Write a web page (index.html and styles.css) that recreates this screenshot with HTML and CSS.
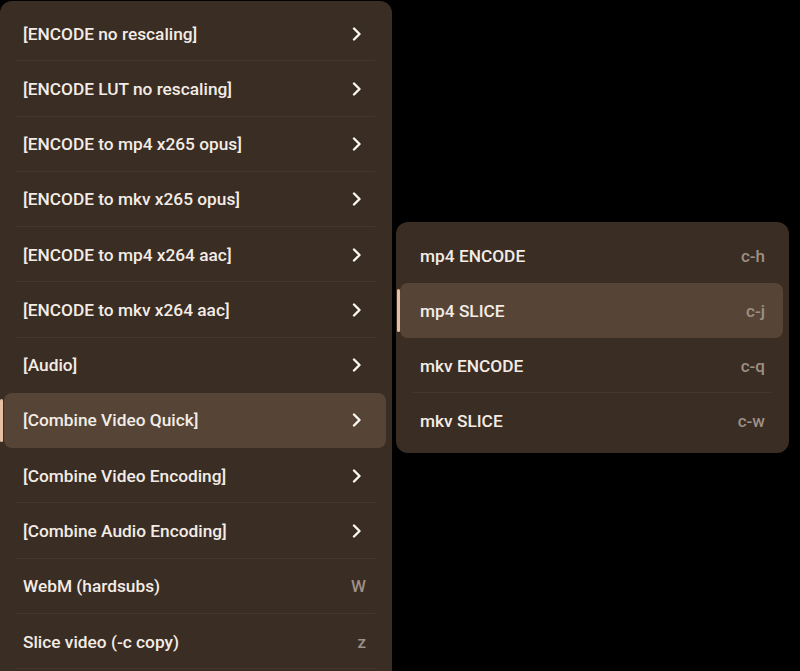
FILE: index.html
```html
<!DOCTYPE html>
<html>
<head>
<meta charset="utf-8">
<link rel="stylesheet" href="styles.css">
</head>
<body>
<div class="stage">
  <div class="menu main">
    <div class="item"><span class="label">[ENCODE no rescaling]</span><svg class="chev" viewBox="0 0 10 14"><path d="M2 1.5 L7.5 7 L2 12.5"/></svg></div>
    <div class="item"><span class="label">[ENCODE LUT no rescaling]</span><svg class="chev" viewBox="0 0 10 14"><path d="M2 1.5 L7.5 7 L2 12.5"/></svg></div>
    <div class="item"><span class="label">[ENCODE to mp4 x265 opus]</span><svg class="chev" viewBox="0 0 10 14"><path d="M2 1.5 L7.5 7 L2 12.5"/></svg></div>
    <div class="item"><span class="label">[ENCODE to mkv x265 opus]</span><svg class="chev" viewBox="0 0 10 14"><path d="M2 1.5 L7.5 7 L2 12.5"/></svg></div>
    <div class="item"><span class="label">[ENCODE to mp4 x264 aac]</span><svg class="chev" viewBox="0 0 10 14"><path d="M2 1.5 L7.5 7 L2 12.5"/></svg></div>
    <div class="item"><span class="label">[ENCODE to mkv x264 aac]</span><svg class="chev" viewBox="0 0 10 14"><path d="M2 1.5 L7.5 7 L2 12.5"/></svg></div>
    <div class="item pre-active"><span class="label">[Audio]</span><svg class="chev" viewBox="0 0 10 14"><path d="M2 1.5 L7.5 7 L2 12.5"/></svg></div>
    <div class="item active"><span class="label">[Combine Video Quick]</span><svg class="chev" viewBox="0 0 10 14"><path d="M2 1.5 L7.5 7 L2 12.5"/></svg></div>
    <div class="item"><span class="label">[Combine Video Encoding]</span><svg class="chev" viewBox="0 0 10 14"><path d="M2 1.5 L7.5 7 L2 12.5"/></svg></div>
    <div class="item"><span class="label">[Combine Audio Encoding]</span><svg class="chev" viewBox="0 0 10 14"><path d="M2 1.5 L7.5 7 L2 12.5"/></svg></div>
    <div class="item"><span class="label">WebM (hardsubs)</span><span class="key">W</span></div>
    <div class="item"><span class="label">Slice video (-c copy)</span><span class="key">z</span></div>
  </div>
  <div class="menu sub">
    <div class="item pre-active"><span class="label">mp4 ENCODE</span><span class="key">c-h</span></div>
    <div class="item active"><span class="label">mp4 SLICE</span><span class="key">c-j</span></div>
    <div class="item"><span class="label">mkv ENCODE</span><span class="key">c-q</span></div>
    <div class="item last"><span class="label">mkv SLICE</span><span class="key">c-w</span></div>
  </div>
</div>
</body>
</html>
```
FILE: styles.css
```css
html, body {
  margin: 0;
  padding: 0;
  background: #000;
  overflow: hidden;
}
body {
  width: 800px;
  height: 671px;
  font-family: Roboto, "Liberation Sans", sans-serif;
}
.stage {
  display: flex;
  align-items: flex-start;
  gap: 4px;
}
.menu {
  background: #3a2d23;
  border-radius: 12px;
  padding: 5px 6px 5px 4px;
  box-sizing: border-box;
  position: relative;
}
.main {
  width: 392px;
  margin-top: 1px;
  height: 700px;
}
.sub {
  width: 393px;
  margin-top: 222px;
  padding-top: 6px;
}
.item {
  position: relative;
  height: 55.27px;
  display: flex;
  align-items: center;
  justify-content: space-between;
  padding: 0 20px 0 19px;
  border-radius: 8px;
  color: #f3ece6;
  font-size: 17.3px;
  font-weight: 500;
}
.sub .item {
  height: 55px;
  padding: 0 18px 0 20px;
}
.item::after {
  content: "";
  position: absolute;
  left: 12px;
  right: 11px;
  bottom: 0;
  height: 1px;
  background: #46372c;
}
.item.last::after,
.item.active::after,
.item.pre-active::after {
  display: none;
}
.item.active {
  background: #564536;
}
.item.active::before {
  content: "";
  position: absolute;
  left: -4px;
  top: 6px;
  bottom: 6px;
  width: 3px;
  border-radius: 2px;
  background: #e6c0a4;
}
.sub .item.active::before {
  left: -3px;
}
.chev {
  width: 10px;
  height: 14px;
  margin-right: 4px;
  fill: none;
  stroke: #fbf7f3;
  stroke-width: 2.4;
  stroke-linecap: round;
  stroke-linejoin: round;
}
.key {
  color: #9d9087;
  font-size: 17px;
  font-weight: 500;
}
```
